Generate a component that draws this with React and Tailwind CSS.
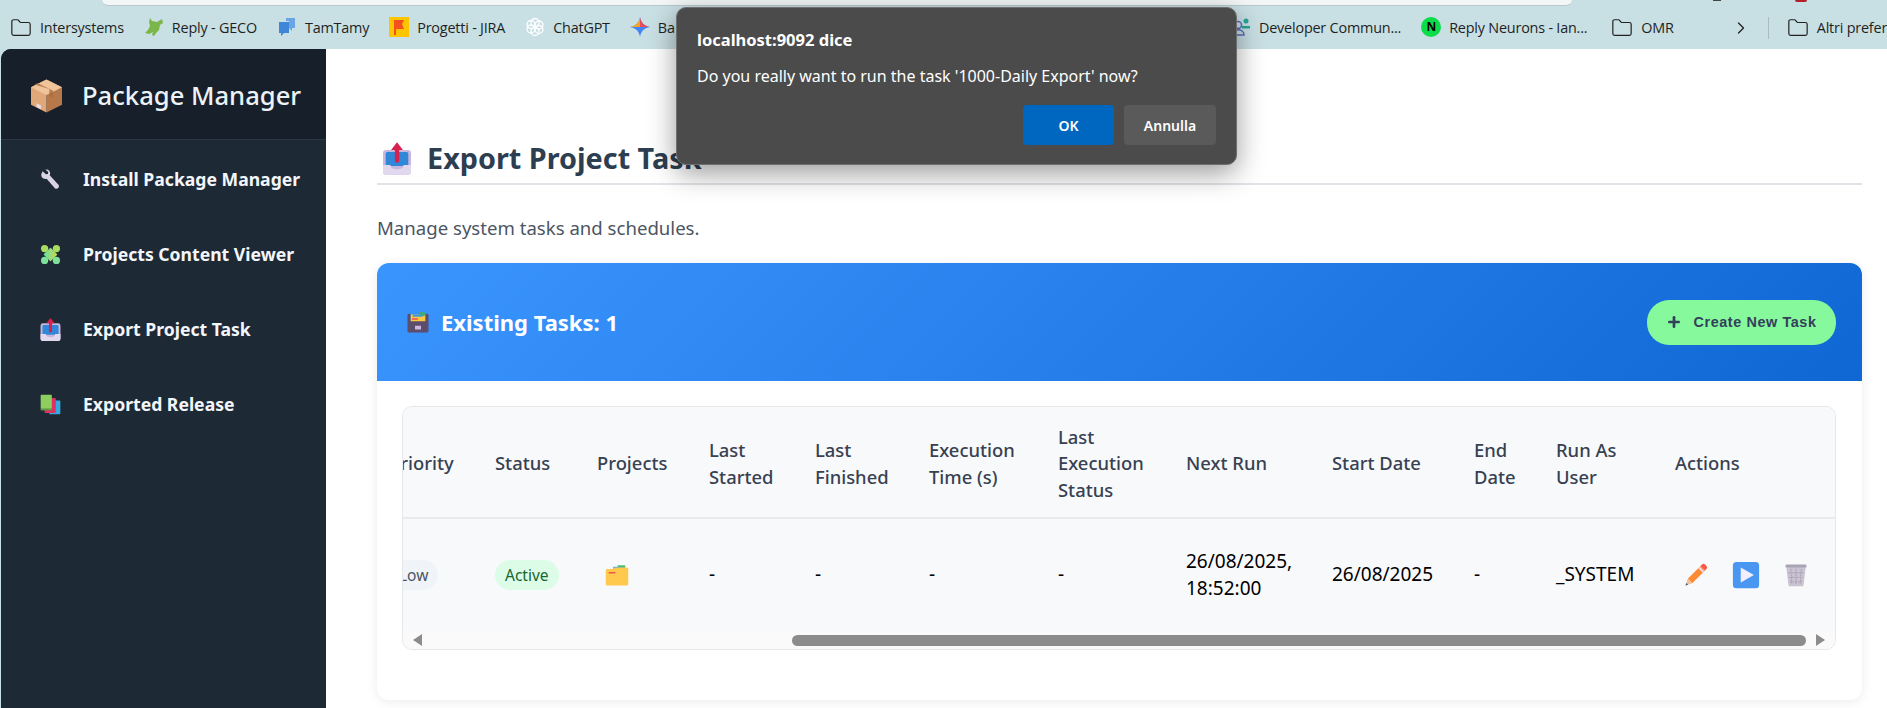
import React from "react";
import { ChevronRight, Folder, Plus } from "lucide-react";

const BoxIcon = ({ className }) => (
  <svg viewBox="2 0 28 32" className={className}>
    <path d="M16 1 30 8v16l-14 7z" fill="#b8794a" />
    <path d="M16 1 2 8v16l14 7z" fill="#e0a878" />
    <path d="M16 1 30 8l-14 7L2 8z" fill="#f0c49b" />
    <path d="m8 4.200 14 7v6l-3.500-1.500v-6L5 5.500z" fill="#a56c42" opacity=".75" />
    <path d="M7 22.500l4 2v3.400l-4-2z" fill="#e8dce8" />
  </svg>
);

const WrenchIcon = ({ className }) => (
  <svg viewBox="0 0 32 32" className={className}>
    <path d="M4 3.500 9 8l3-.5.7-3L8.400 1C12 0 16 2.500 15.500 7.500L14.800 9.500 27 23a3.800 3.800 0 1 1-5.300 5L10 14.800C6 16 1.200 13 2 7.500z" fill="#d9d3e3" />
  </svg>
);

const PuzzleIcon = ({ className }) => (
  <svg viewBox="0 0 32 32" className={className}>
    <defs>
      <linearGradient id="puzzleFill" x1="1" y1="0" x2="0" y2="1">
        <stop offset="0" stopColor="#c8d64a" />
        <stop offset="1" stopColor="#68e0a8" />
      </linearGradient>
    </defs>
    <g fill="url(#puzzleFill)" transform="rotate(45 16 16)">
      <rect x="8.500" y="8.500" width="15" height="15" rx="1" />
    </g>
    <g fill="#a9dc62">
      <circle cx="25" cy="7" r="5.500" />
      <circle cx="7" cy="7" r="5.500" />
    </g>
    <g fill="#7fe09a">
      <circle cx="25" cy="25" r="5.500" />
      <circle cx="7" cy="25" r="5.500" />
    </g>
  </svg>
);

const OutboxIcon = ({ className }) => (
  <svg viewBox="3 1 26 30" className={className}>
    <rect x="3" y="8" width="26" height="23" rx="3" fill="#c9b6dc" />
    <rect x="5.500" y="10" width="21" height="13" rx="1.500" fill="#2f88d8" />
    <path d="M3 22h7c0 3 2.500 4 6 4s6-1 6-4h7v6a3 3 0 0 1-3 3H6a3 3 0 0 1-3-3z" fill="#e2d8ee" />
    <path d="M16 1l5.500 7h-3.500v10a2 2 0 0 1-4 0V8h-3.500z" fill="#d8214f" />
  </svg>
);

const BooksIcon = ({ className }) => (
  <svg viewBox="0 0 32 32" className={className}>
    <rect x="14" y="10" width="17" height="21" rx="1.500" fill="#35a9e0" />
    <rect x="7" y="6" width="17" height="23" rx="1.500" fill="#dc3262" />
    <rect x="1" y="1" width="17" height="22" rx="1.500" fill="#8ccf5e" />
    <rect x="1" y="22" width="17" height="3" fill="#5e9a45" />
  </svg>
);

const FileBoxIcon = ({ className }) => (
  <svg viewBox="0 0 32 32" className={className}>
    <path d="M6 6h20v12H6z" fill="#fcc83f" />
    <path d="M17 3h8v5h-8z" fill="#3fae6a" />
    <path d="M9 6h13v3H9z" fill="#3f9ae0" />
    <path d="M8 11h8v2H8z" fill="#ef5350" />
    <path d="M2 7a2 2 0 0 1 2-2h2v10h20V5h2a2 2 0 0 1 2 2v21a2 2 0 0 1-2 2H4a2 2 0 0 1-2-2z" fill="#5b4d6b" />
    <rect x="12" y="21" width="8" height="5" fill="#c7b8dc" />
  </svg>
);

const ProjectFolderIcon = ({ className }) => (
  <svg viewBox="0 0 32 28" className={className}>
    <path d="M17 1h10v5H17z" fill="#4fbf75" />
    <path d="M11 3h12v4H11z" fill="#48a4e6" />
    <path d="M3 6h8l2-2h16a2 2 0 0 1 2 2v20a2 2 0 0 1-2 2H3a2 2 0 0 1-2-2V8a2 2 0 0 1 2-2z" fill="#ffc94d" />
    <path d="M5 10h9v2H5z" fill="#ef5350" />
  </svg>
);

const PencilIcon = ({ className }) => (
  <svg viewBox="0 0 32 32" className={className}>
    <path d="m22 4 6 6L11 27l-6-6z" fill="#ff8a34" />
    <path d="m24 2a3 3 0 0 1 4 0l2 2a3 3 0 0 1 0 4l-2 2-6-6z" fill="#f8574b" />
    <path d="m21 5 6 6-2 2-6-6z" fill="#e9d9e4" />
    <path d="m5 21 6 6-9 3z" fill="#e8c49c" />
    <path d="m3 26.500 2.500 2.500-3.500 1z" fill="#5b4d6b" />
  </svg>
);

const PlayIcon = ({ className }) => (
  <svg viewBox="0 0 32 32" className={className}>
    <rect x="1" y="1" width="30" height="30" rx="4" fill="#4a97f2" />
    <path d="M10 7.500 25 16 10 24.500z" fill="#f3eefc" />
  </svg>
);

const TrashIcon = ({ className }) => (
  <svg viewBox="0 0 32 32" className={className}>
    <path d="M3 5h26l-3 25a1.500 1.500 0 0 1-1.500 1h-17A1.500 1.500 0 0 1 6 30z" fill="#c9c3d2" />
    <path d="M9 8l1.500 20M16 8v20M23 8l-1.500 20M6 13h20M7 19h18M8 25h16" stroke="#a39cae" strokeWidth="1.400" strokeDasharray="2 1.500" fill="none" />
    <rect x="2" y="2" width="28" height="4" rx="1.500" fill="#a9a3b5" />
  </svg>
);

const GeckoIcon = () => (
  <svg viewBox="0 0 20 20" className="w-5 h-5 shrink-0">
    <path d="M6 1 8 4l5 1 5-3 1 4-3 2-1 5-3 3-2 3-2-1 1-3-4 2-4-1 3-3 2-4-1-4z" fill="#7ab648" />
  </svg>
);

const TamTamyIcon = () => (
  <svg viewBox="0 0 20 20" className="w-5 h-5 shrink-0">
    <path d="M2 5h10v11H7l-3 3v-3H2z" fill="#3d86d8" />
    <path d="M9 1h9v10h-3v3l-3-3V4H9z" fill="#6aa6e6" />
  </svg>
);

const JiraIcon = () => (
  <svg viewBox="0 0 20 20" className="w-5 h-5 shrink-0">
    <rect width="20" height="20" fill="#ffc400" />
    <path d="M5 3h10l-2 4 2 5H7v6H5z" fill="#f4511e" />
  </svg>
);

const ChatGptIcon = () => (
  <svg viewBox="0 0 20 20" className="w-5 h-5 shrink-0" fill="none" stroke="#fff" strokeWidth="1.300">
    <circle cx="10" cy="5.500" r="4" />
    <circle cx="14" cy="8" r="4" />
    <circle cx="14" cy="12.500" r="4" />
    <circle cx="10" cy="14.500" r="4" />
    <circle cx="6" cy="12" r="4" />
    <circle cx="6" cy="7.500" r="4" />
  </svg>
);

const GeminiIcon = () => (
  <svg viewBox="0 0 20 20" className="w-5 h-5 shrink-0">
    <path d="M10 0c.8 5.500 4 9 10 10-6 1-9.200 4.500-10 10C9.200 14.500 6 11 0 10c6-1 9.200-4.500 10-10z" fill="#4285f4" />
    <path d="M10 0c.8 5.500 4 9 10 10H10z" fill="#ea4b5a" />
    <path d="M0 10c6-1 9.200-4.500 10-10v10z" fill="#f6a623" />
  </svg>
);

const CommunityIcon = () => (
  <svg viewBox="0 0 20 20" className="w-5 h-5 shrink-0">
    <circle cx="7" cy="8" r="3.500" fill="none" stroke="#5c6bc0" strokeWidth="1.500" />
    <path d="M1 18c0-7 12-7 12 0z" fill="none" stroke="#5c6bc0" strokeWidth="1.500" />
    <circle cx="15" cy="4" r="2.500" fill="#26a69a" />
    <path d="M11 9h8v2.500h-8z" fill="#26a69a" />
  </svg>
);

const Bookmark = ({ icon, label, className = "" }) => (
  <div className={`flex items-center gap-2 shrink-0 ${className}`}>
    {icon}
    <span className="whitespace-nowrap">{label}</span>
  </div>
);

const BookmarkFolder = () => <Folder size={22} strokeWidth={1.3} className="shrink-0 text-[#222]" />;

const navItems = [
  { label: "Install Package Manager", Icon: WrenchIcon },
  { label: "Projects Content Viewer", Icon: PuzzleIcon },
  { label: "Export Project Task", Icon: OutboxIcon },
  { label: "Exported Release", Icon: BooksIcon },
];

const headers = [
  ["Priority", "w-[106px]"],
  ["Status", "w-[102px]"],
  ["Projects", "w-[112px]"],
  ["Last Started", "w-[106px]"],
  ["Last Finished", "w-[114px]"],
  ["Execution Time (s)", "w-[129px]"],
  ["Last Execution Status", "w-[128px]"],
  ["Next Run", "w-[146px]"],
  ["Start Date", "w-[142px]"],
  ["End Date", "w-[82px]"],
  ["Run As User", "w-[119px]"],
  ["Actions", "w-[177px]"],
];

const Cell = ({ children }) => <td className="px-4 align-middle text-black text-[19px]">{children}</td>;

export default function App() {
  return (
    <div className="relative w-[1887px] h-[708px] overflow-hidden flex flex-col bg-[#c8dfe3] font-['Noto_Sans',sans-serif]">
      {/* browser chrome */}
      <div className="h-[49px] shrink-0 flex flex-col">
        <div className="h-[6px] flex items-start">
          <div className="h-[6px] ml-[102px] w-[1470px] bg-[#f3f6f7] border-b border-[#b9c8cb] rounded-b-[10px]" />
          <div className="ml-[141px] w-[8px] h-px bg-[#444]" />
          <div className="ml-[74px] w-[12px] h-[2px] rounded-b-full bg-[#b3202c]" />
        </div>
        <div className="flex-1 flex items-center pl-[10px] text-[14.4px] text-[#1f1f1f] font-['Open_Sans',sans-serif] tracking-[-0.2px]">
          <div className="w-[1221px] shrink-0 flex items-center gap-[20px]">
            <Bookmark icon={<BookmarkFolder />} label="Intersystems" />
            <Bookmark icon={<GeckoIcon />} label="Reply - GECO" />
            <Bookmark icon={<TamTamyIcon />} label="TamTamy" />
            <Bookmark icon={<JiraIcon />} label="Progetti - JIRA" />
            <Bookmark icon={<ChatGptIcon />} label="ChatGPT" />
            <Bookmark icon={<GeminiIcon />} label="Ba" />
          </div>
          <Bookmark icon={<CommunityIcon />} label="Developer Commun..." />
          <Bookmark className="ml-[20px]" icon={<span className="w-5 h-5 rounded-full bg-[#0bdc4a] flex items-center justify-center text-[12px] font-bold text-black">N</span>} label="Reply Neurons - Ian..." />
          <Bookmark className="ml-[24px]" icon={<BookmarkFolder />} label="OMR" />
          <ChevronRight size={20} strokeWidth={1.5} className="ml-[57px] text-[#222] shrink-0" />
          <div className="ml-[17px] w-px h-[22px] bg-[#a9bcc0] shrink-0" />
          <Bookmark className="ml-[18px]" icon={<BookmarkFolder />} label="Altri preferiti" />
        </div>
      </div>

      <div className="flex-1 flex min-h-0">
        {/* sidebar */}
        <aside className="w-[325px] ml-px shrink-0 bg-[#1e2936] rounded-tl-[10px] overflow-hidden">
          <div className="h-[91px] flex items-center gap-[20px] pl-[30px] pt-[4px] bg-[#17202a] border-b border-[#2a3744]">
            <BoxIcon className="w-[31px] h-[36px]" />
            <span className="text-[25.6px] font-medium text-[#ecf3f8] whitespace-nowrap">Package Manager</span>
          </div>
          <nav className="pt-[2px]">
            {navItems.map(({ label, Icon }) => (
              <div key={label} className="h-[75px] flex items-center pl-[39px] gap-[22px]">
                <Icon className="w-[21px] h-[23px] shrink-0" />
                <span className="text-[17.6px] font-bold text-[#f3f6fa] whitespace-nowrap">{label}</span>
              </div>
            ))}
          </nav>
        </aside>

        {/* main content */}
        <main className="flex-1 min-w-0 bg-white pl-[51px] pr-[25px] pt-[88px]">
          <div className="h-[48px] flex items-center pl-[6px] gap-[16px] border-b-2 border-[#e0e4e8]">
            <OutboxIcon className="w-[28px] h-[33px] mb-[3px]" />
            <h1 className="text-[28.8px] font-bold text-[#2c3e50] whitespace-nowrap leading-none mb-[3px]">Export Project Task</h1>
          </div>
          <p className="mt-[29px] text-[18.6px] leading-[27px] text-[#4b5563]">Manage system tasks and schedules.</p>
          <section className="mt-[22px] rounded-[12px] bg-white shadow-[0_2px_12px_rgba(0,0,0,0.08)] h-[437px] flex flex-col">
            <div className="h-[118px] shrink-0 rounded-t-[12px] bg-[linear-gradient(135deg,#3b95ff,#0f67d3)] flex items-center justify-between pl-[29px] pr-[26px]">
              <div className="flex items-center gap-[11px]">
                <FileBoxIcon className="w-[24px] h-[24px]" />
                <span className="text-[22px] font-bold text-white whitespace-nowrap">Existing Tasks: 1</span>
              </div>
              <button className="w-[189px] h-[45px] rounded-[22px] bg-[#86f99d] flex items-center justify-center gap-[11px] pt-[2px] text-[14.4px] font-bold tracking-[0.6px] text-[#33405a] font-['Liberation_Sans',sans-serif]">
                <Plus size={16} strokeWidth={4} className="mb-[3px]" />
                Create New Task
              </button>
            </div>
            <div className="ml-[25px] mr-[26px] mt-[25px] h-[244px] border border-[#e5e7eb] rounded-[10px] overflow-hidden bg-white">
              <div className="h-[224px] overflow-hidden bg-[#f8f9fb]">
                <table className="table-fixed w-[1463px] -ml-[30px] text-[18.4px] leading-[26.4px] border-collapse">
                  <colgroup>
                    {headers.map(([name, width]) => (
                      <col key={name} className={width} />
                    ))}
                  </colgroup>
                  <thead>
                    <tr className="h-[111px] border-b-2 border-[#e8eaed]">
                      {headers.map(([name]) => (
                        <th key={name} className="px-4 pt-[3px] text-left font-medium text-[#374151] align-middle">{name}</th>
                      ))}
                    </tr>
                  </thead>
                  <tbody>
                    <tr className="h-[112px]">
                      <Cell>
                        <span className="block w-fit px-[10px] rounded-full bg-[#f0f4f9] text-[#4b5563] text-[15.5px] leading-[30px]">Low</span>
                      </Cell>
                      <Cell>
                        <span className="block w-fit px-[10px] rounded-full bg-[#dcfce7] text-[#166534] text-[15.5px] leading-[30px]">Active</span>
                      </Cell>
                      <Cell>
                        <ProjectFolderIcon className="ml-[8px] w-[24px] h-[22px]" />
                      </Cell>
                      <Cell>-</Cell>
                      <Cell>-</Cell>
                      <Cell>-</Cell>
                      <Cell>-</Cell>
                      <Cell>26/08/2025, 18:52:00</Cell>
                      <Cell>26/08/2025</Cell>
                      <Cell>-</Cell>
                      <Cell>_SYSTEM</Cell>
                      <Cell>
                        <div className="flex items-center ml-[9px] gap-[24px]">
                          <PencilIcon className="w-[24px] h-[24px] shrink-0" />
                          <PlayIcon className="w-[28px] h-[28px] shrink-0" />
                          <TrashIcon className="w-[24px] h-[24px] shrink-0" />
                        </div>
                      </Cell>
                    </tr>
                  </tbody>
                </table>
              </div>
              {/* scrollbar */}
              <div className="h-[18px] bg-[#fafafa] flex items-center pl-[10px] pr-[10px]">
                <span className="w-0 h-0 border-y-[6px] border-y-transparent border-r-[9px] border-r-[#8c8c8c]" />
                <div className="ml-[370px] w-[1014px] h-[11px] rounded-full bg-[#8c8c8c]" />
                <span className="ml-[10px] w-0 h-0 border-y-[6px] border-y-transparent border-l-[9px] border-l-[#8c8c8c]" />
              </div>
            </div>
          </section>
        </main>
      </div>

      {/* alert dialog */}
      <div className="absolute left-[676px] top-[7px] w-[561px] h-[158px] rounded-[10px] bg-[#4b4b4b] border border-[#6f6f6f] shadow-[0_8px_28px_rgba(0,0,0,0.4)] px-[20px] pt-[22px] text-white font-['Noto_Sans',sans-serif]">
        <div className="text-[16.5px] font-bold leading-[20px]">localhost:9092 dice</div>
        <div className="mt-[16px] text-[16px] leading-[20px]">Do you really want to run the task '1000-Daily Export' now?</div>
        <div className="mt-[19px] flex justify-end gap-[10px]">
          <button className="w-[91px] h-[40px] rounded-[4px] bg-[#0067c0] text-[14px] font-semibold text-white">OK</button>
          <button className="w-[92px] h-[40px] rounded-[4px] bg-[#5a5a5a] text-[14px] font-semibold text-white">Annulla</button>
        </div>
      </div>
    </div>
  );
}
